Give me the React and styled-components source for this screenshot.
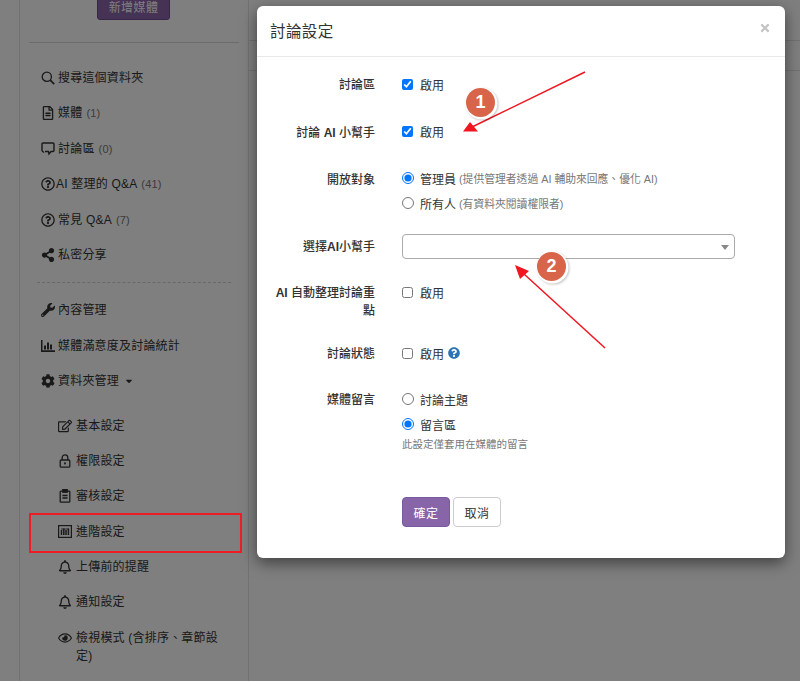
import React from "react";
import styled, { createGlobalStyle } from "styled-components";
import {
  FaRegFileAlt,
  FaRegQuestionCircle,
  FaShareAlt,
  FaWrench,
  FaCog,
  FaRegEdit,
  FaRegBell,
  FaRegEye,
  FaCaretDown,
  FaQuestionCircle,
  FaTimes,
} from "react-icons/fa";

const GlobalStyle = createGlobalStyle`
  html, body {
    margin: 0;
    padding: 0;
    height: 100%;
    overflow: hidden;
  }
  body {
    font-family: "Liberation Sans", "Noto Sans CJK TC", sans-serif;
    font-size: 12px;
    color: #333;
  }
`;

const Page = styled.div`
  position: relative;
  width: 800px;
  height: 681px;
  overflow: hidden;
  background: #fff;
  display: flex;
`;

const Sidebar = styled.aside`
  width: 230px;
  height: 681px;
  margin-left: 19px;
  box-sizing: border-box;
  padding: 0 9px;
  border-left: 1px solid #e4e4e4;
  border-right: 1px solid #e4e4e4;
  flex-shrink: 0;
`;

const AddButton = styled.button`
  display: block;
  width: 73px;
  height: 28px;
  margin: -8px 0 0 68px;
  border: 1px solid #6e4d94;
  border-radius: 3px;
  background: #8b64a8;
  color: #fff;
  font: inherit;
  font-size: 12px;
  letter-spacing: 0.4px;
`;

const Rule = styled.hr`
  margin: 22px 0 17px;
  border: 0;
  border-top: 1px solid #d8d8d8;
`;

const Dashed = styled.hr`
  margin: 10px 8px 9px;
  border: 0;
  border-top: 1px dashed #d0d0d0;
`;

const Menu = styled.ul`
  list-style: none;
  margin: 0;
  padding: 0 ${(p) => (p.$sub ? "4px" : "0")} 0 ${(p) => (p.$sub ? "21px" : "4px")};
`;

const Item = styled.li`
  display: flex;
  align-items: flex-start;
  min-height: 35.4px;
  box-sizing: border-box;
  padding: 9px 8px 0 8px;
  line-height: 18px;
  font-size: 12px;
  letter-spacing: 0.2px;
  color: #333;
`;

const ItemIcon = styled.span`
  display: inline-flex;
  align-items: center;
  justify-content: center;
  width: 14px;
  height: 18px;
  margin-right: ${(p) => p.$gap ?? 3}px;
  flex-shrink: 0;
  color: #333;
  font-size: 14px;
`;

const Count = styled.span`
  color: #777;
  font-size: 11px;
  margin-left: 4px;
`;

const Caret = styled(FaCaretDown)`
  margin-left: 5px;
  font-size: 10px;
  vertical-align: -1px;
`;

const SubGap = styled.div`
  height: 9px;
`;

const Highlight = styled.div`
  position: absolute;
  left: 29px;
  top: 513px;
  width: 213px;
  height: 40px;
  box-sizing: border-box;
  border: 2px solid #ee1c25;
  z-index: 5;
`;

const Content = styled.main`
  flex: 1;
  display: flex;
  flex-direction: column;
`;

const ContentLine = styled.div`
  height: ${(p) => p.$h}px;
  border-bottom: 1px solid #e4e4e4;
`;

const Backdrop = styled.div`
  position: absolute;
  inset: 0;
  background: rgba(0, 0, 0, 0.5);
  z-index: 2;
`;

const Modal = styled.div`
  position: absolute;
  left: 257px;
  top: 6px;
  width: 528px;
  height: 552px;
  background: #fff;
  border-radius: 6px;
  box-shadow: 0 5px 15px rgba(0, 0, 0, 0.5);
  z-index: 3;
`;

const ModalHeader = styled.header`
  display: flex;
  align-items: center;
  justify-content: space-between;
  height: 51px;
  box-sizing: border-box;
  padding: 0 14px 3px 13px;
  border-bottom: 1px solid #e8e8e8;
`;

const ModalTitle = styled.h4`
  margin: 0;
  font-size: 15.5px;
  font-weight: 400;
  letter-spacing: 0.4px;
  color: #333;
`;

const Close = styled(FaTimes)`
  color: #c4c4c4;
  font-size: 12px;
  margin-bottom: 3px;
`;

const Form = styled.form`
  padding: 18px 0 0;
`;

const Row = styled.div`
  display: grid;
  grid-template-columns: 118px 1fr;
  column-gap: 27px;
  margin-bottom: ${(p) => p.$mb ?? 0}px;
`;

const Label = styled.label`
  box-sizing: border-box;
  padding: ${(p) => p.$top ?? 1}px 0 0 16px;
  text-align: right;
  font-size: 12px;
  line-height: 18px;
  font-weight: 500;
  color: #333;
`;

const Latin = styled.b`
  font-weight: 700;
`;

const Field = styled.div`
  display: flex;
  flex-direction: column;
  gap: 7px;
`;

const Choice = styled.label`
  display: flex;
  align-items: center;
  height: 18px;
  font-size: 12px;
  color: #333;
`;

const Check = styled.input.attrs({ type: "checkbox" })`
  width: 11px;
  height: 11px;
  margin: 0 7px 0 0;
  accent-color: #0075ff;
`;

const Radio = styled.input.attrs({ type: "radio" })`
  width: 12px;
  height: 12px;
  margin: 0 6px 0 0;
  accent-color: #0075ff;
`;

const Hint = styled.span`
  margin-left: 3px;
  color: #777;
  font-size: 10.8px;
`;

const HelpIcon = styled(FaQuestionCircle)`
  margin-left: 4px;
  color: #2b73b7;
  font-size: 12px;
`;

const Note = styled.p`
  margin: -3px 0 0;
  color: #777;
  font-size: 10.5px;
  line-height: 15px;
`;

const SelectBox = styled.div`
  position: relative;
  width: 333px;
  height: 25px;
  box-sizing: border-box;
  background: #fff;
  border: 1px solid #aaa;
  border-radius: 4px;
  &::after {
    content: "";
    position: absolute;
    right: 5px;
    top: 10px;
    border: 4px solid transparent;
    border-top: 5px solid #888;
    border-bottom: 0;
  }
`;

const Actions = styled.div`
  display: flex;
  gap: 3px;
  margin: 45px 0 0 145px;
`;

const Button = styled.button`
  width: ${(p) => p.$w}px;
  height: 30px;
  box-sizing: border-box;
  border-radius: 4px;
  font: inherit;
  font-size: 12px;
  letter-spacing: 0.4px;
  border: 1px solid ${(p) => (p.$primary ? "#7a5a9e" : "#ccc")};
  background: ${(p) => (p.$primary ? "#8864a8" : "#fff")};
  color: ${(p) => (p.$primary ? "#fff" : "#333")};
`;

const Overlay = styled.svg`
  position: absolute;
  left: 0;
  top: 0;
  width: 800px;
  height: 681px;
  z-index: 4;
  pointer-events: none;
`;

const Badge = styled.div`
  position: absolute;
  left: ${(p) => p.$x}px;
  top: ${(p) => p.$y}px;
  width: 29px;
  height: 29px;
  border-radius: 50%;
  background: #d8654a;
  box-shadow: 1px 1px 0 1.5px #fff, 2px 2px 3px 1px rgba(0, 0, 0, 0.3);
  color: #fff;
  font-size: 18px;
  font-weight: 700;
  line-height: 29px;
  text-align: center;
  z-index: 5;
`;

const CommentsIcon = () => (
  <svg width="14" height="14" viewBox="0 0 14 14" fill="none" stroke="currentColor" strokeWidth="1.4">
    <path d="M1 9V2a1 1 0 011-1h10a1 1 0 011 1v6.5a1 1 0 01-1 1H10l-2 2.5-.5-2.5H4" />
    <path d="M1 9l2 1.5" />
  </svg>
);

const SearchIcon = () => (
  <svg width="14" height="14" viewBox="0 0 14 14" fill="none" stroke="currentColor" strokeWidth="1.3">
    <circle cx="5.8" cy="5.8" r="4.6" />
    <path d="M9.2 9.2l4 4" strokeWidth="1.7" />
  </svg>
);

const BarsIcon = () => (
  <svg width="14" height="12" viewBox="0 0 14 12" fill="currentColor">
    <path d="M0 0h1.5v10.3H14V12H0z" />
    <path d="M3 5.5h2V9.5H3zM6 2.5h2v7H6zM9 4.5h2v5H9z" />
  </svg>
);

const LockIcon = () => (
  <svg width="12" height="14" viewBox="0 0 12 14" fill="none" stroke="currentColor" strokeWidth="1.3">
    <rect x="1.2" y="6" width="9.6" height="7.2" rx="1" />
    <path d="M3.2 6V3.6a2.8 2.8 0 015.6 0V6" />
    <rect x="5.1" y="8.4" width="1.8" height="2" fill="currentColor" stroke="none" />
  </svg>
);

const ClipboardIcon = () => (
  <svg width="12" height="14" viewBox="0 0 12 14" fill="none" stroke="currentColor" strokeWidth="1.3">
    <rect x="1.2" y="2.2" width="9.6" height="11" rx="0.8" />
    <rect x="3.8" y="0.6" width="4.4" height="2.6" fill="currentColor" />
    <path d="M3.4 6.5h5.2M3.4 9h5.2" />
  </svg>
);

const AdvancedIcon = () => (
  <svg width="14" height="13" viewBox="0 0 14 13" fill="none" stroke="currentColor" strokeWidth="1.2">
    <rect x="0.6" y="0.6" width="12.8" height="11.8" />
    <path d="M3.5 10V5M5.8 10V3.5M8 10V5M10.4 10V3.5" strokeWidth="1.5" />
    <path d="M3 4h8" strokeWidth="0.8" />
  </svg>
);

const Arrow = ({ x1, y1, x2, y2, head }) => (
  <g>
    <line x1={x1} y1={y1} x2={x2} y2={y2} stroke="#f0151f" strokeWidth="1.5" />
    <polygon points={head} fill="#f0151f" />
  </g>
);

const mainItems = [
  { icon: <SearchIcon />, label: "搜尋這個資料夾" },
  { icon: <FaRegFileAlt />, label: "媒體", count: "(1)" },
  { icon: <CommentsIcon />, label: "討論區", count: "(0)" },
  { icon: <FaRegQuestionCircle />, gap: 1, label: "AI 整理的 Q&A", count: "(41)" },
  { icon: <FaRegQuestionCircle />, label: "常見 Q&A", count: "(7)" },
  { icon: <FaShareAlt />, label: "私密分享" },
];

const manageItems = [
  { icon: <FaWrench />, label: "內容管理" },
  { icon: <BarsIcon />, label: "媒體滿意度及討論統計" },
  { icon: <FaCog />, label: "資料夾管理", caret: true },
];

const subItems = [
  { icon: <FaRegEdit />, gap: 4, label: "基本設定" },
  { icon: <LockIcon />, gap: 4, label: "權限設定" },
  { icon: <ClipboardIcon />, gap: 4, label: "審核設定" },
  { icon: <AdvancedIcon />, gap: 4, label: "進階設定" },
  { icon: <FaRegBell />, gap: 4, label: "上傳前的提醒" },
  { icon: <FaRegBell />, gap: 4, label: "通知設定" },
  { icon: <FaRegEye />, gap: 4, label: "檢視模式 (含排序、章節設定)" },
];

const renderItem = (item) => (
  <Item key={item.label}>
    <ItemIcon $gap={item.gap}>{item.icon}</ItemIcon>
    <span>
      {item.label}
      {item.count && <Count>{item.count}</Count>}
      {item.caret && <Caret />}
    </span>
  </Item>
);

export default function App() {
  return (
    <Page>
      <GlobalStyle />
      <Sidebar>
        <AddButton>新增媒體</AddButton>
        <Rule />
        <Menu>{mainItems.map(renderItem)}</Menu>
        <Dashed />
        <Menu>{manageItems.map(renderItem)}</Menu>
        <SubGap />
        <Menu $sub>{subItems.map(renderItem)}</Menu>
      </Sidebar>
      <Content>
        <ContentLine $h={40} />
        <ContentLine $h={29} />
      </Content>
      <Backdrop />
      <Modal>
        <ModalHeader>
          <ModalTitle>討論設定</ModalTitle>
          <Close />
        </ModalHeader>
        <Form>
          <Row $mb={28}>
            <Label>討論區</Label>
            <Choice>
              <Check defaultChecked />
              啟用
            </Choice>
          </Row>
          <Row $mb={27}>
            <Label $top={2}>
              討論 <Latin>AI</Latin> 小幫手
            </Label>
            <Choice>
              <Check defaultChecked />
              啟用
            </Choice>
          </Row>
          <Row $mb={22}>
            <Label $top={2}>開放對象</Label>
            <Field>
              <Choice>
                <Radio name="audience" defaultChecked />
                管理員<Hint>(提供管理者透過 AI 輔助來回應、優化 AI)</Hint>
              </Choice>
              <Choice>
                <Radio name="audience" />
                所有人<Hint>(有資料夾閱讀權限者)</Hint>
              </Choice>
            </Field>
          </Row>
          <Row $mb={24}>
            <Label $top={4}>
              選擇<Latin>AI</Latin>小幫手
            </Label>
            <SelectBox />
          </Row>
          <Row $mb={24}>
            <Label>
              <Latin>AI</Latin> 自動整理討論重點
            </Label>
            <Choice>
              <Check />
              啟用
            </Choice>
          </Row>
          <Row $mb={27}>
            <Label>討論狀態</Label>
            <Choice>
              <Check />
              啟用
              <HelpIcon />
            </Choice>
          </Row>
          <Row>
            <Label>媒體留言</Label>
            <Field>
              <Choice>
                <Radio name="comment" />
                討論主題
              </Choice>
              <Choice>
                <Radio name="comment" defaultChecked />
                留言區
              </Choice>
              <Note>此設定僅套用在媒體的留言</Note>
            </Field>
          </Row>
          <Actions>
            <Button type="button" $primary $w={48}>
              確定
            </Button>
            <Button type="button" $w={48}>
              取消
            </Button>
          </Actions>
        </Form>
      </Modal>
      <Highlight />
      <Overlay viewBox="0 0 800 681">
        <Arrow x1={585} y1={72} x2={472} y2={127} head="463,131.5 478,131.5 470,122" />
        <Arrow x1={605} y1={348} x2={524} y2={274} head="515,265 520,279 529,271" />
      </Overlay>
      <Badge $x={466} $y={88}>1</Badge>
      <Badge $x={537} $y={252}>2</Badge>
    </Page>
  );
}
